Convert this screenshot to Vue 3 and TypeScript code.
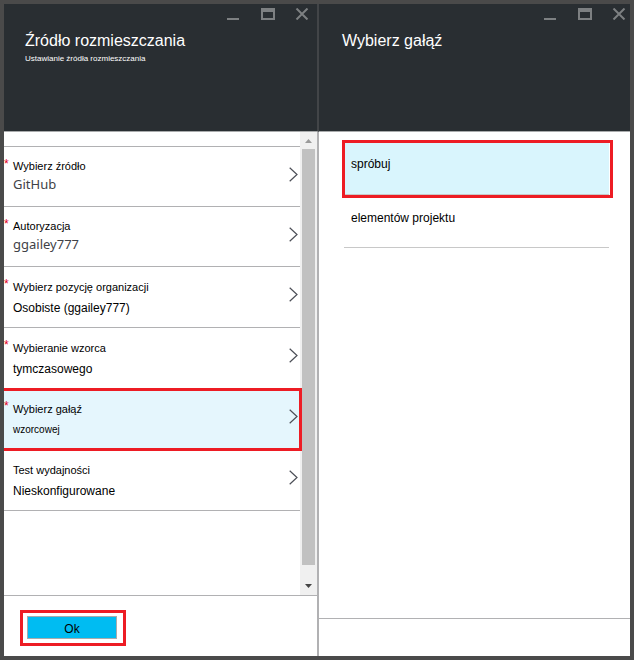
<script setup lang="ts">
import { ref } from 'vue'

interface Setting {
  label: string
  value: string
  required: boolean
  size: 'large' | 'normal' | 'small'
}

const settings: Setting[] = [
  { label: 'Wybierz źródło', value: 'GitHub', required: true, size: 'large' },
  { label: 'Autoryzacja', value: 'ggailey777', required: true, size: 'large' },
  { label: 'Wybierz pozycję organizacji', value: 'Osobiste (ggailey777)', required: true, size: 'normal' },
  { label: 'Wybieranie wzorca', value: 'tymczasowego', required: true, size: 'normal' },
  { label: 'Wybierz gałąź', value: 'wzorcowej', required: true, size: 'small' },
  { label: 'Test wydajności', value: 'Nieskonfigurowane', required: false, size: 'normal' },
]
const branches: string[] = ['spróbuj', 'elementów projektu']

const activeSetting = ref(4)
const activeBranch = ref(0)
const blades = [
  { id: 'source', title: 'Źródło rozmieszczania', subtitle: 'Ustawianie źródła rozmieszczania' },
  { id: 'branch', title: 'Wybierz gałąź', subtitle: '' },
]
</script>

<template>
  <main class="portal">
    <section v-for="blade in blades" :key="blade.id" class="blade" :class="blade.id">
      <header class="head">
        <div class="controls">
          <button type="button" class="control">
            <svg width="14" height="12" viewBox="0 0 14 12"><path d="M0 10h12v2H0z" fill="#7d8082" /></svg>
          </button>
          <button type="button" class="control">
            <svg width="14" height="12" viewBox="0 0 14 12"><path d="M0 0h14v12H0zM2 4v6h10V4z" fill="#7d8082" fill-rule="evenodd" /></svg>
          </button>
          <button type="button" class="control">
            <svg width="14" height="12" viewBox="0 0 14 12"><path d="M1.5 .5l11 11M12.5 .5l-11 11" stroke="#7d8082" stroke-width="2" /></svg>
          </button>
        </div>
        <h1 class="title">{{ blade.title }}</h1>
        <p v-if="blade.subtitle" class="subtitle">{{ blade.subtitle }}</p>
      </header>

      <template v-if="blade.id === 'source'">
        <div class="body">
          <div class="settings">
            <button
              v-for="(s, i) in settings"
              :key="s.label"
              type="button"
              class="row"
              :class="[s.size, { active: i === activeSetting }]"
              @click="activeSetting = i"
            >
              <span v-if="s.required" class="star">*</span>
              <span class="texts">
                <span class="label">{{ s.label }}</span>
                <span class="value">{{ s.value }}</span>
              </span>
              <svg class="chevron" width="9" height="15" viewBox="0 0 9 15">
                <path d="M.7 .7L8 7.5L.7 14.3" fill="none" stroke="#4c4f57" stroke-width="1.2" />
              </svg>
            </button>
          </div>
          <div class="scrollbar">
            <svg class="arrow" width="7" height="4" viewBox="0 0 7 4"><path d="M0 4L3.5 0L7 4z" fill="#9a9a9a" /></svg>
            <div class="thumb"></div>
            <svg class="arrow" width="7" height="4" viewBox="0 0 7 4"><path d="M0 0h7L3.5 4z" fill="#454545" /></svg>
          </div>
        </div>
        <footer class="foot">
          <div class="callout">
            <button type="button" class="ok">Ok</button>
          </div>
        </footer>
      </template>

      <template v-else>
        <div class="body branches">
          <button
            v-for="(b, i) in branches"
            :key="b"
            type="button"
            class="branch-item"
            :class="{ active: i === activeBranch }"
            @click="activeBranch = i"
          >
            <span class="branch-name">{{ b }}</span>
          </button>
        </div>
        <footer class="foot short"></footer>
      </template>
    </section>
  </main>
</template>

<style>
body {
  margin: 0;
}
</style>

<style scoped>
.portal {
  box-sizing: border-box;
  display: flex;
  min-height: 100vh;
  border: 4px solid #4a4a4a;
  background: #fff;
  color: #000;
  font-family: "Liberation Sans", Arial, sans-serif;
}
button {
  margin: 0;
  padding: 0;
  border: 0;
  background: none;
  color: inherit;
  font: inherit;
  text-align: left;
  cursor: pointer;
}
.blade {
  box-sizing: border-box;
  flex: 1;
  min-width: 0;
  display: flex;
  flex-direction: column;
}
.source {
  flex-basis: 4px;
  border-right: 2px solid #b1b1b3;
}
.head {
  box-sizing: border-box;
  height: 128px;
  padding: 4px 4px 0 23px;
  border-bottom: 1px solid #a9abac;
  background: #292e32;
  color: #fff;
}
.source .head {
  margin-right: -2px;
  padding-right: 8px;
  padding-left: 21px;
  border-right: 2px solid #424548;
}
.controls {
  display: flex;
  justify-content: flex-end;
  gap: 20px;
  height: 23px;
}
.control {
  display: flex;
  width: 14px;
  height: 12px;
}
.title {
  margin: 0;
  font-size: 16px;
  line-height: 20px;
  font-weight: 400;
}
.subtitle {
  margin: 2px 0 0;
  font-size: 8px;
  line-height: 12px;
}
.body {
  flex: 1;
  display: flex;
}
.settings {
  flex: 1;
  min-width: 0;
  display: flex;
  flex-direction: column;
  padding-top: 14px;
}
.settings::before {
  content: "";
  border-top: 1px solid #b1b1b3;
}
.row {
  box-sizing: border-box;
  position: relative;
  display: flex;
  align-items: center;
  height: 61px;
  padding: 0 2px 0 9px;
  border-bottom: 1px solid #b1b1b3;
}
.row.large {
  height: 60px;
}
.row.active {
  background: #e5f6fd;
}
.row.active::after {
  content: "";
  position: absolute;
  inset: -1px -2px -2px 0;
  border: 3px solid #ed1c24;
  border-left: 0;
}
.star {
  position: absolute;
  left: 0;
  top: 9px;
  color: #e3001b;
  font-size: 12px;
  line-height: 16px;
}
.texts {
  flex: 1;
  display: flex;
  flex-direction: column;
  gap: 5px;
}
.label {
  font-size: 11px;
  line-height: 16px;
}
.value {
  font-size: 12px;
  line-height: 16px;
}
.large .texts {
  gap: 0;
  margin-top: -2px;
}
.large .value {
  color: #3f4247;
  font-family: "Noto Sans", "Open Sans", sans-serif;
  font-size: 13px;
  line-height: 20px;
}
.small .value {
  font-size: 10px;
}
.chevron {
  margin-top: -5px;
}
.scrollbar {
  box-sizing: border-box;
  width: 17px;
  display: flex;
  flex-direction: column;
  align-items: center;
  padding: 7px 0;
  background: #f0f0f0;
}
.arrow {
  flex: none;
}
.thumb {
  flex: 1;
  width: 13px;
  margin: 6px 0 19px;
  background: #c1c1c1;
}
.foot {
  box-sizing: border-box;
  min-height: 61px;
  padding: 14px 16px 10px;
  border-top: 1px solid #b1b1b3;
}
.foot.short {
  min-height: 38px;
  padding: 0;
}
.callout {
  display: inline-flex;
  padding: 3px 6px 4px 4px;
  border: 3px solid #ed1c24;
}
.ok {
  box-sizing: border-box;
  width: 90px;
  height: 23px;
  padding-top: 2px;
  border: 1px solid #a9abac;
  background: #00bcf2;
  font-size: 12px;
  text-align: center;
}
.branches {
  flex-direction: column;
  padding: 11px 21px 0 25px;
}
.branch-item {
  box-sizing: border-box;
  position: relative;
  display: flex;
  height: 53px;
  padding: 15px 8px 0 7px;
  border-bottom: 1px solid #c8c8c8;
  font-size: 12px;
  line-height: 16px;
}
.branch-item.active {
  height: 52px;
  padding-top: 13px;
  background: #d9f5fd;
}
.branch-item.active::after {
  content: "";
  position: absolute;
  inset: -3px -4px -4px -2px;
  border: 3px solid #ed1c24;
}
</style>
